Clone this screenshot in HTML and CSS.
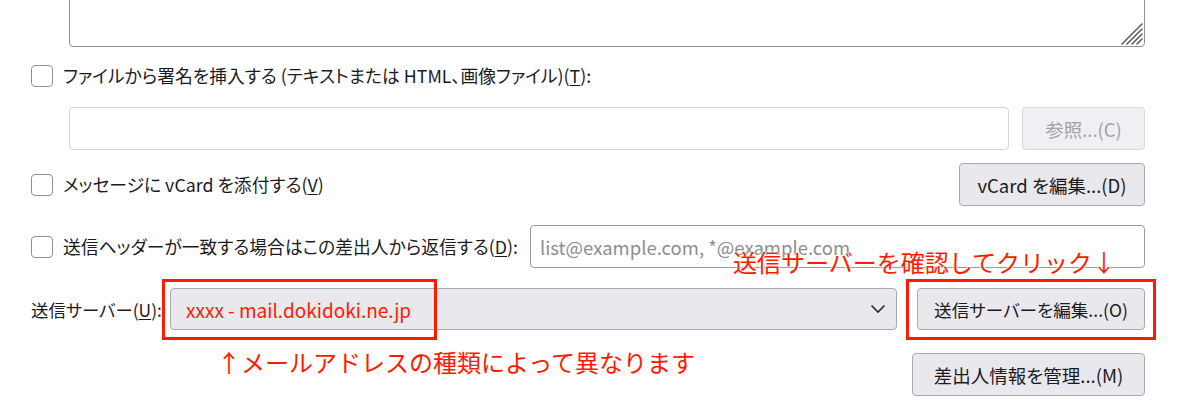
FILE: index.html
```html
<!DOCTYPE html>
<html lang="ja">
<head>
<meta charset="utf-8">
<title>差出人設定</title>
<link rel="stylesheet" href="styles.css">
</head>
<body>
<div class="page">
  <div class="sig-wrap">
    <textarea class="sig-area"></textarea>
    <svg class="grip" width="22" height="22" viewBox="0 0 22 22">
      <g stroke="#5b5b66" stroke-width="1.6" stroke-linecap="round">
        <line x1="1" y1="21" x2="21" y2="1"/>
        <line x1="6" y1="21" x2="21" y2="6"/>
        <line x1="11" y1="21" x2="21" y2="11"/>
        <line x1="16" y1="21" x2="21" y2="16"/>
      </g>
    </svg>
  </div>

  <label class="check-row row-file">
    <span class="box"></span>
    <span class="lbl">ファイルから署名を挿入する (テキストまたは HTML、画像ファイル)(<u>T</u>):</span>
  </label>

  <div class="file-row">
    <input class="field field-disabled" type="text" disabled>
    <button class="btn btn-disabled" disabled>参照...(C)</button>
  </div>

  <div class="split-row row-vcard">
    <label class="check-row">
      <span class="box"></span>
      <span class="lbl">メッセージに vCard を添付する(<u>V</u>)</span>
    </label>
    <button class="btn btn-vcard">vCard を編集...(D)</button>
  </div>

  <div class="split-row row-reply">
    <label class="check-row">
      <span class="box"></span>
      <span class="lbl">送信ヘッダーが一致する場合はこの差出人から返信する(<u>D</u>):</span>
    </label>
    <input class="field field-reply" type="text" placeholder="list@example.com, *@example.com">
  </div>

  <div class="server-row">
    <span class="lbl lbl-server">送信サーバー(<u>U</u>):</span>
    <div class="select">
      <span class="select-text">xxxx - mail.dokidoki.ne.jp</span>
      <svg class="chev" width="16" height="10" viewBox="0 0 16 10">
        <polyline points="1.5,1.5 8,8 14.5,1.5" fill="none" stroke="#2b2a33" stroke-width="1.6"/>
      </svg>
    </div>
    <button class="btn btn-server">送信サーバーを編集...(O)</button>
  </div>

  <div class="manage-row">
    <button class="btn btn-manage">差出人情報を管理...(M)</button>
  </div>

  <div class="mark mark-select"></div>
  <div class="mark mark-button"></div>
  <div class="note note-top">送信サーバーを確認してクリック↓</div>
  <div class="note note-bottom">↑メールアドレスの種類によって異なります</div>
</div>
</body>
</html>
```

FILE: styles.css
```css
html, body {
  margin: 0;
  padding: 0;
  background: #ffffff;
}

body {
  font-family: "Noto Sans CJK JP", "Noto Sans", sans-serif;
  font-size: 17.8px;
  font-feature-settings: "palt";
  color: #1b1b1f;
  overflow: hidden;
}

.page {
  display: flow-root;
  position: relative;
  width: 1114px;
  height: 416px;
  padding-left: 31px;
}

u {
  text-decoration-thickness: 1px;
  text-underline-offset: 2px;
}

.sig-wrap {
  position: relative;
  margin-top: -20px;
  margin-left: 38px;
  height: 67px;
}

.sig-area {
  display: block;
  box-sizing: border-box;
  width: 100%;
  height: 67px;
  margin: 0;
  border: 1px solid #8f8f9d;
  border-radius: 4px;
  resize: none;
  background: #fff;
}

.grip {
  position: absolute;
  right: 2px;
  bottom: 2px;
}

.check-row {
  display: flex;
  align-items: center;
  gap: 10px;
  height: 23px;
  white-space: nowrap;
}

.box {
  box-sizing: border-box;
  flex: none;
  width: 22px;
  height: 22px;
  border: 1px solid #8f8f9d;
  border-radius: 4px;
  background: #fff;
}

.lbl {
  line-height: 23px;
  white-space: nowrap;
}

.lbl-server {
  font-size: 17.4px;
}

.row-file {
  margin-top: 17px;
}

.file-row {
  display: flex;
  gap: 13px;
  margin-top: 20px;
  margin-left: 38px;
  height: 43px;
}

.field {
  box-sizing: border-box;
  height: 43px;
  margin: 0;
  border: 1px solid #8f8f9d;
  border-radius: 4px;
  background: #fff;
  font-family: inherit;
  font-size: 18.5px;
  font-feature-settings: "palt";
  padding: 0 9px;
  color: #1b1b1f;
}

.field::placeholder {
  color: #8c8c93;
}

.field-disabled {
  flex: 1;
  border-color: #d6d6db;
}

.btn {
  box-sizing: border-box;
  height: 42px;
  margin: 0;
  padding: 0 8px;
  border: 1px solid #a9a9b1;
  border-radius: 4px;
  background: #e9e9ed;
  font-family: inherit;
  font-size: 18.5px;
  font-feature-settings: "palt";
  color: #1b1b1f;
  white-space: nowrap;
}

.btn-disabled {
  width: 123px;
  height: 43px;
  background: #f0f0f4;
  border-color: #d9d9de;
  color: #a3a3a8;
}

.split-row {
  display: flex;
  align-items: center;
  height: 43px;
}

.row-vcard {
  justify-content: space-between;
  margin-top: 13px;
}

.btn-vcard {
  width: 186px;
  height: 43px;
}

.row-reply {
  gap: 12px;
  margin-top: 19px;
}

.field-reply {
  flex: 1;
  min-width: 0;
  border-color: #9a9aa3;
}

.server-row {
  display: grid;
  grid-template-columns: 139px 1fr 228px;
  column-gap: 20px;
  align-items: center;
  height: 42px;
  margin-top: 20px;
}

.server-row .lbl {
  margin-right: -20px;
}

.btn-server {
  font-size: 17.6px;
}

.select {
  box-sizing: border-box;
  height: 42px;
  display: flex;
  align-items: center;
  justify-content: space-between;
  padding: 0 10px 0 15px;
  border: 1px solid #a9a9b1;
  border-radius: 4px;
  background: #e9e9ed;
  margin-left: -20px;
}

.select-text {
  color: #ff1a00;
  font-size: 19px;
}

.manage-row {
  display: flex;
  justify-content: flex-end;
  margin-top: 23px;
}

.btn-manage {
  width: 233px;
  height: 43px;
}

.mark {
  position: absolute;
  box-sizing: border-box;
  border: 3px solid #ff1a00;
}

.mark-select {
  left: 162px;
  top: 279px;
  width: 275px;
  height: 61px;
}

.mark-button {
  left: 906px;
  top: 279px;
  width: 250px;
  height: 61px;
}

.note {
  position: absolute;
  color: #ff1a00;
  font-size: 24px;
  font-feature-settings: normal;
  line-height: 30px;
  white-space: nowrap;
  text-shadow: 0 0 2px #fff, 0 0 2px #fff, 0 0 2px #fff;
}

.note-top {
  left: 733px;
  top: 247px;
}

.note-bottom {
  left: 217px;
  top: 347px;
}
```
